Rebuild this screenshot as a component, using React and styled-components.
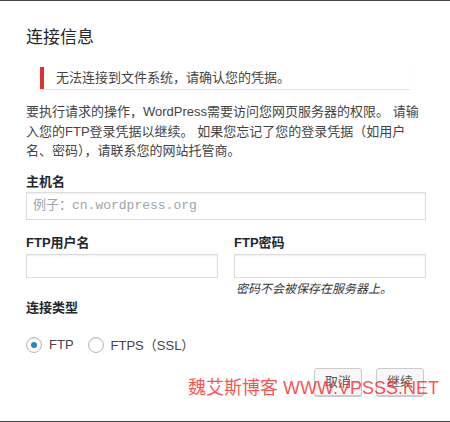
import styled, { createGlobalStyle } from "styled-components";

const GlobalStyle = createGlobalStyle`
  html, body {
    margin: 0;
    padding: 0;
    background: #fff;
  }
  body {
    font-family: "Liberation Sans", "Noto Sans CJK SC", sans-serif;
    color: #444;
  }
`;

const Dialog = styled.div`
  position: relative;
  width: 450px;
  height: 422px;
  box-sizing: border-box;
  border-top: 1px solid #444;
  border-bottom: 1px solid #444;
  padding: 0 24px 0 26px;
  background: #fff;
`;

const Title = styled.h2`
  margin: 26px 0 0;
  font-size: 17px;
  font-weight: normal;
  line-height: 22px;
  color: #23282d;
`;

const Notice = styled.div`
  margin: 18px 16px 0 14px;
  padding: 1px 12px;
  border-left: 4px solid #dc3232;
  background: #fff;
  box-shadow: 0 1px 1px rgba(0, 0, 0, 0.1);
  font-size: 13px;
  line-height: 20px;
  color: #444;
`;

const Intro = styled.p`
  margin: 13px 0 0;
  font-size: 13px;
  line-height: 19.5px;
  color: #444;
`;

const Label = styled.label`
  display: block;
  margin-top: ${(p) => p.$top}px;
  font-size: 13px;
  font-weight: bold;
  line-height: 18px;
  color: #23282d;
`;

const TextInput = styled.input`
  display: block;
  width: 100%;
  height: ${(p) => p.$h}px;
  margin-top: ${(p) => p.$top}px;
  box-sizing: border-box;
  padding: 0 6px;
  border: 1px solid #ddd;
  box-shadow: inset 0 1px 2px rgba(0, 0, 0, 0.07);
  background: #fff;
  font-size: 13px;
  font-family: "Liberation Mono", "Noto Sans CJK SC", monospace;
  color: #32373c;
  outline: none;

  &::placeholder {
    color: #a0a5aa;
  }
`;

const Columns = styled.div`
  display: grid;
  grid-template-columns: 1fr 1fr;
  column-gap: 16px;
`;

const Field = styled.div`
  display: flex;
  flex-direction: column;
`;

const Note = styled.em`
  display: block;
  margin-top: 3px;
  padding-left: 2px;
  font-size: 12px;
  line-height: 16px;
  color: #32373c;
`;

const RadioRow = styled.div`
  display: flex;
  align-items: center;
  margin-top: 20px;
  height: 16px;
`;

const RadioLabel = styled.label`
  display: flex;
  align-items: center;
  gap: 7px;
  margin-right: 14px;
  font-size: 13px;
  color: #444;
`;

const Radio = styled.input.attrs({ type: "radio" })`
  appearance: none;
  margin: 0;
  width: 16px;
  height: 16px;
  box-sizing: border-box;
  border: 1px solid #b4b9be;
  border-radius: 50%;
  background: #fff;
  box-shadow: inset 0 1px 2px rgba(0, 0, 0, 0.1);
  display: grid;
  place-items: center;

  &:checked::before {
    content: "";
    width: 6px;
    height: 6px;
    border-radius: 50%;
    background: #1e8cbe;
  }
`;

const Actions = styled.div`
  display: flex;
  justify-content: flex-end;
  gap: 14px;
  margin-top: 15px;
  padding-right: 2px;
`;

const Button = styled.button`
  height: 28px;
  padding: 0 10px;
  border: 1px solid #ccc;
  border-radius: 3px;
  background: #f7f7f7;
  box-shadow: 0 1px 0 #ccc;
  font-family: "Liberation Sans", "Noto Sans CJK SC", sans-serif;
  font-size: 13px;
  line-height: 26px;
  color: #555;
  cursor: pointer;
`;

const Watermark = styled.div`
  position: absolute;
  left: 188px;
  top: 375px;
  font-size: 18px;
  line-height: 24px;
  white-space: nowrap;
  color: rgba(255, 30, 30, 0.8);
  pointer-events: none;
`;

export default function App() {
  return (
    <>
      <GlobalStyle />
      <Dialog>
        <Title>连接信息</Title>
        <Notice>无法连接到文件系统，请确认您的凭据。</Notice>
        <Intro>
          要执行请求的操作，WordPress需要访问您网页服务器的权限。 请输入您的FTP登录凭据以继续。
          如果您忘记了您的登录凭据（如用户名、密码），请联系您的网站托管商。
        </Intro>

        <Label $top={12}>主机名</Label>
        <TextInput $h={28} $top={1} placeholder="例子：cn.wordpress.org" />

        <Columns>
          <Field>
            <Label $top={14}>FTP用户名</Label>
            <TextInput $h={24} $top={2} />
          </Field>
          <Field>
            <Label $top={14}>FTP密码</Label>
            <TextInput $h={24} $top={2} type="password" />
            <Note>密码不会被保存在服务器上。</Note>
          </Field>
        </Columns>

        <Label $top={2}>连接类型</Label>
        <RadioRow>
          <RadioLabel>
            <Radio name="conn" defaultChecked />
            FTP
          </RadioLabel>
          <RadioLabel>
            <Radio name="conn" />
            FTPS（SSL）
          </RadioLabel>
        </RadioRow>

        <Actions>
          <Button>取消</Button>
          <Button>继续</Button>
        </Actions>

        <Watermark>魏艾斯博客 WWW.VPSSS.NET</Watermark>
      </Dialog>
    </>
  );
}
